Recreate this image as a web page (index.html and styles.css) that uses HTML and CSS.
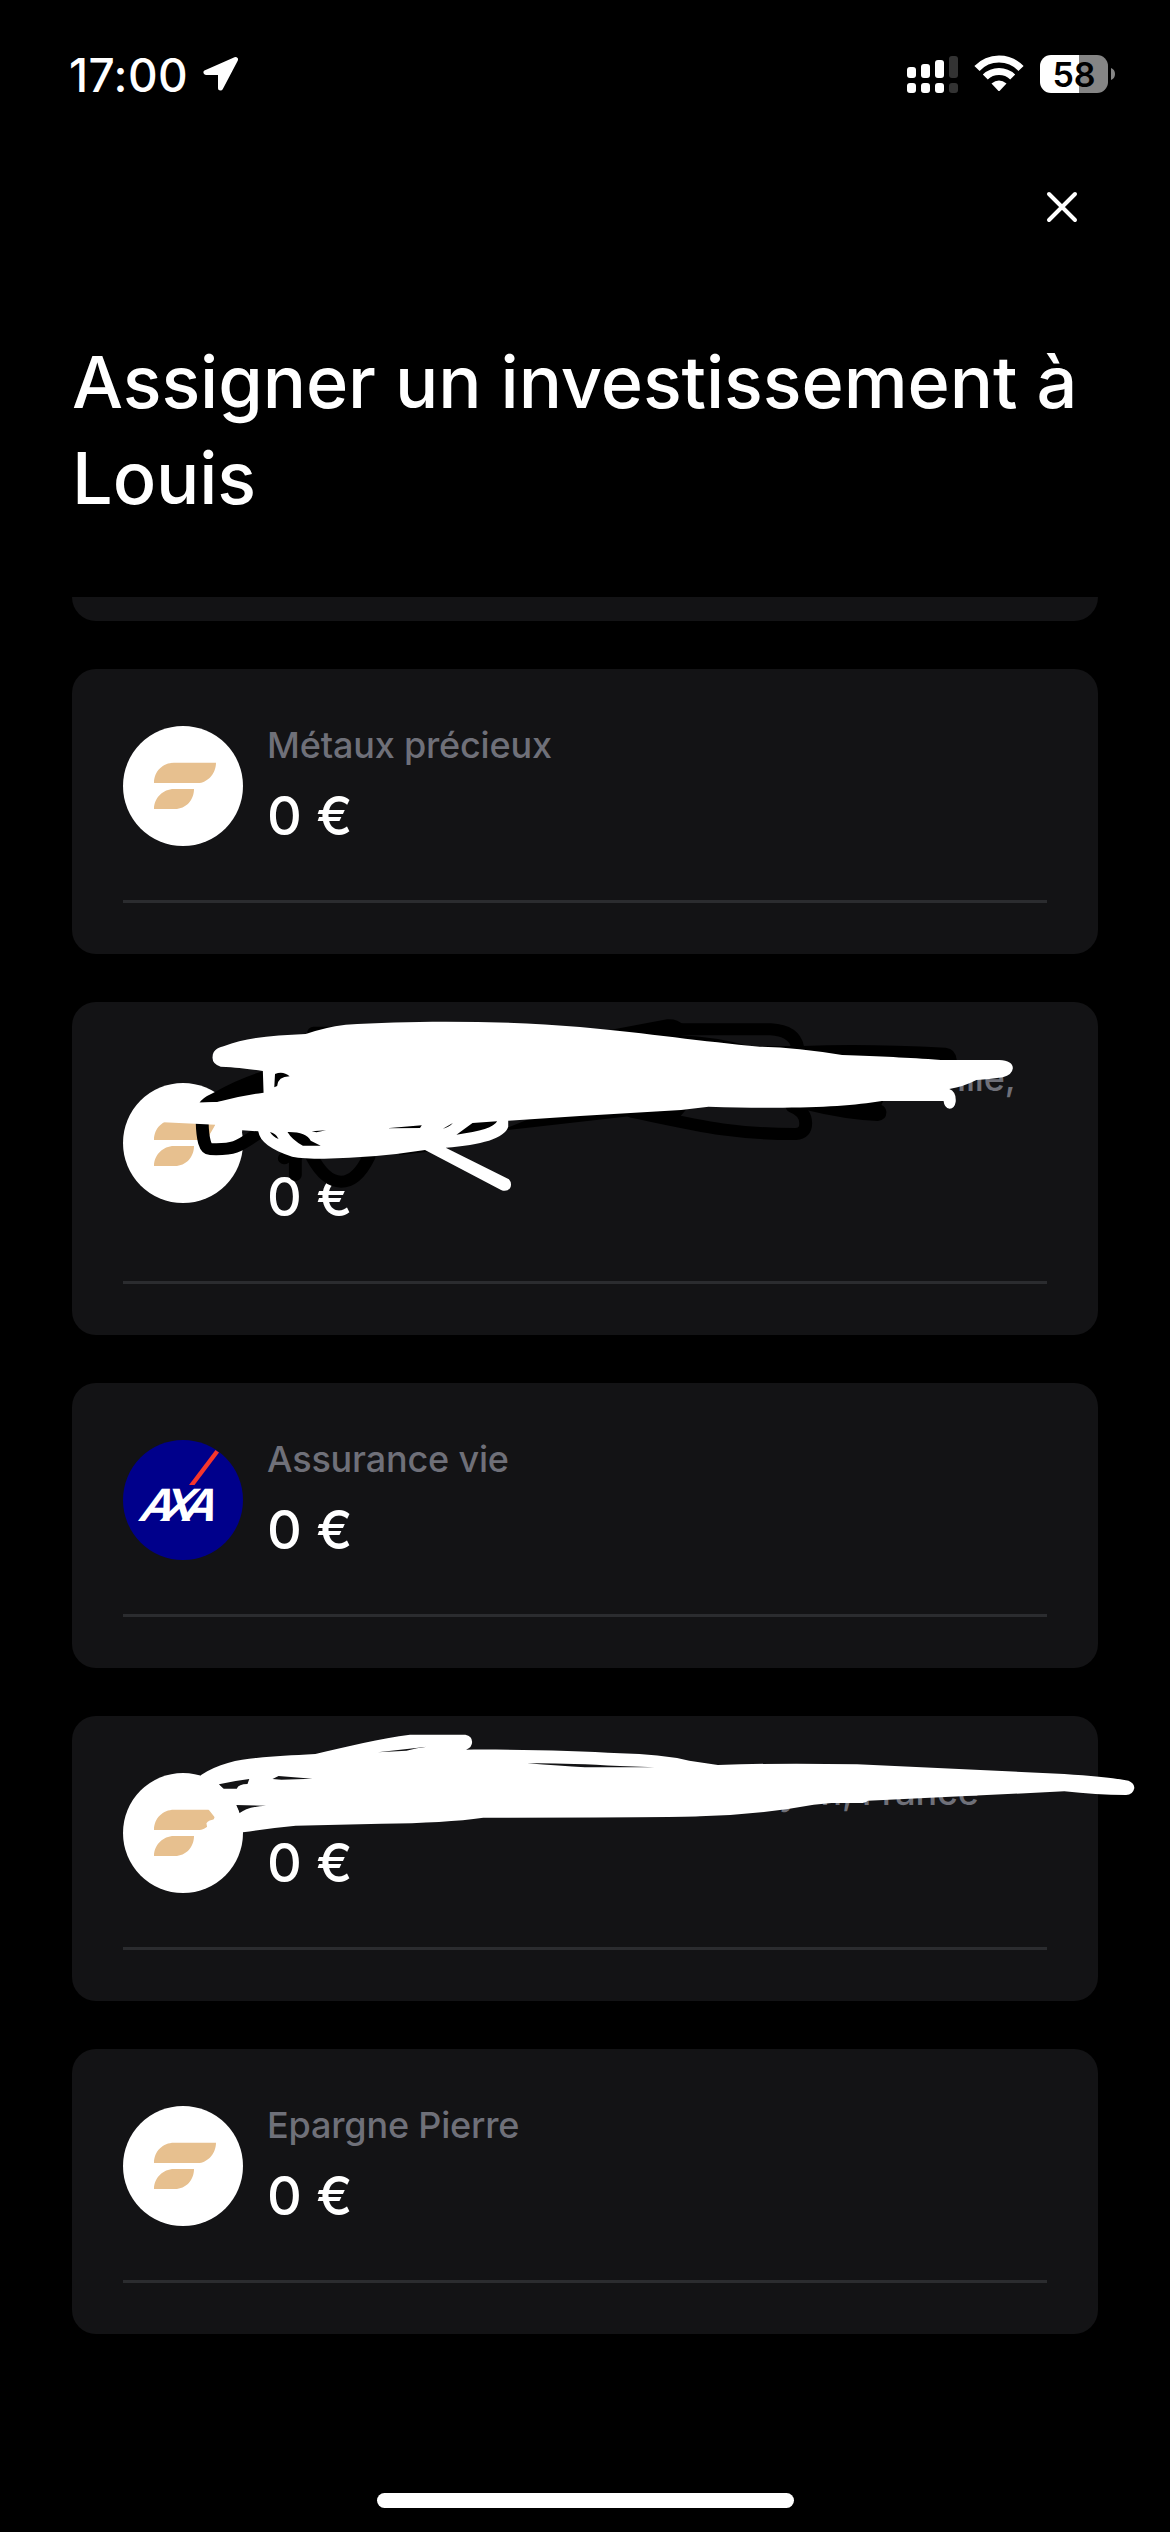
FILE: index.html
```html
<!DOCTYPE html>
<html lang="fr">
<head>
<meta charset="utf-8">
<title>Assigner un investissement</title>
<link rel="stylesheet" href="styles.css">
</head>
<body>
<svg class="defs" width="0" height="0">
  <symbol id="mark" viewBox="0 0 120 120">
    <rect width="120" height="120" fill="#fff"/>
    <path fill="#e7c08f" d="M31 57C31 45 40 36.7 51 36.7H93C93 48 84 57 75 57ZM31 83C31 72 40 63 51 63H71C71 74 63 83 52 83Z"/>
  </symbol>
</svg>
<div class="screen">
  <header class="status">
    <div class="status-left">
      <span class="time">17:00</span>
      <svg width="38" height="38" viewBox="0 0 38 38"><path d="M33.500 4.500L4 17.500H18.500V33Z" fill="#fff" stroke="#fff" stroke-width="5" stroke-linejoin="round"/></svg>
    </div>
    <div class="status-right">
      <svg width="52" height="38" viewBox="0 0 52 38" fill="#fff">
        <rect y="12" width="9" height="11" rx="3"/><rect x="14" y="9" width="9" height="14" rx="3"/><rect x="28" y="5" width="9" height="18" rx="3"/><rect x="42" y="1" width="9" height="22" rx="3" fill="#333"/>
        <rect y="28" width="9" height="10" rx="3"/><rect x="14" y="28" width="9" height="10" rx="3"/><rect x="28" y="28" width="9" height="10" rx="3"/><rect x="42" y="28" width="9" height="10" rx="3" fill="#333"/>
      </svg>
      <svg class="wifi" width="50" height="38" viewBox="0 0 50 38">
        <g fill="none" stroke="#fff" stroke-width="7.200"><path d="M3 13.500Q12 4 25 4T47 13.500"/><path d="M11.300 22Q17 16.500 25 16.500T38.700 22"/></g>
        <path d="M17.500 28.500Q25 22.500 32.500 28.500L26 35.500Q25 36.500 24 35.500Z" fill="#fff"/>
      </svg>
      <div class="battery">58</div>
      <svg class="nub" width="4" height="12" viewBox="0 0 4 12"><path d="M0 0Q4 1.500 4 6T0 12Z" fill="#858585"/></svg>
    </div>
  </header>
  <div class="close">
    <svg width="32" height="32" viewBox="0 0 32 32"><path d="M3 3L29 29M29 3L3 29" stroke="#fff" stroke-width="4" stroke-linecap="round"/></svg>
  </div>
  <h1>Assigner un investissement à Louis</h1>
  <main class="list">
    <article class="card passed"></article>
    <article class="card">
      <div class="row"><svg class="avatar"><use href="#mark"/></svg>
        <div><div class="label">Métaux précieux</div><div class="amount">0 €</div></div></div>
    </article>
    <article class="card">
      <div class="row"><svg class="avatar"><use href="#mark"/></svg>
        <div><div class="label two-lines"><span class="tail-a">ille,</span></div><div class="amount">0 €</div></div></div>
      <svg class="scribble" width="1110" height="350" viewBox="0 0 3108 1050" preserveAspectRatio="none">
        <g fill="none" stroke="#000" stroke-width="36" stroke-linecap="round">
          <path d="M710 128H800M1740 118H1990Q2055 122 2065 170M1600 365C1800 410 1880 432 2060 432Q2088 430 2088 400Q2088 365 2050 350M398 395Q400 477 420 477C490 480 500 470 555 430M628 505L659 480V555M705 500C755 600 820 600 865 500"/>
        </g>
        <path d="M1540 120L1700 88Q1730 86 1745 105L1740 136Q1830 140 1930 168H2080Q2250 160 2480 173Q2508 176 2511 210H1900ZM390 340Q395 325 430 308Q500 265 570 243H680V320L440 336ZM1230 423L1600 378L1720 400L1760 350H1400ZM2080 358Q2200 390 2290 393Q2314 390 2314 366Q2312 350 2300 345L2306 330H2100ZM950 495L1030 485V460H930Z"/>
        <path fill="#fff" d="M427 203C427 175 450 172 460 168C520 142 600 136 688 132Q740 112 800 104C1000 90 1250 92 1456 111C1650 130 1800 155 1960 170Q2060 172 2190 195C2300 200 2370 202 2466 210H2630Q2668 212 2668 235Q2666 255 2640 262Q2600 268 2566 270Q2530 290 2490 297Q2510 305 2508 335Q2505 355 2491 356Q2476 354 2474 333H2301C2200 350 2080 358 1816 350Q1750 360 1680 364L1456 378L1255 392V410C1245 445 1180 465 1080 473L1257 568Q1267 580 1260 595Q1250 607 1235 600L1022 480Q880 504 740 506Q680 506 650 500C590 480 560 455 555 424L510 421Q512 445 480 450Q430 455 420 432L435 404L290 397L270 380L300 340L440 336Q500 318 570 308L568 243C520 235 500 233 450 230Q427 222 427 203Z"/>
        <g fill="#000"><path d="M602 252Q625 242 643 259Q610 260 608 288L600 292ZM1110 434L1155 399L1224 394Q1212 420 1110 434ZM637 426Q690 425 702 452L730 467H680Q650 450 637 426ZM588 426Q605 430 612 447Q595 440 588 426ZM915 415L1013 406L1008 414ZM1072 416L1100 399Q1090 412 1072 416ZM705 424L745 421L718 427Z"/></g>
      </svg>
    </article>
    <article class="card">
      <div class="row">
        <svg class="avatar" viewBox="0 0 120 120"><rect width="120" height="120" fill="#00008b"/><path d="M66 45L92.500 10L96 12.500L71.500 45Z" fill="#f5362c"/><text class="axa" transform="translate(16 81) skewX(-10)" textLength="77">AXA</text></svg>
        <div><div class="label">Assurance vie</div><div class="amount">0 €</div></div></div>
    </article>
    <article class="card">
      <div class="row"><svg class="avatar"><use href="#mark"/></svg>
        <div><div class="label"><span class="tail-b">yon, France</span></div><div class="amount">0 €</div></div></div>
      <svg class="scribble low" width="1110" height="310" viewBox="0 0 3108 930" preserveAspectRatio="none">
        <path fill="#fff" fill-rule="evenodd" d="M395 225C440 192 500 178 550 174C600 168 650 166 715 162C800 140 900 115 980 104H1135Q1154 108 1154 126Q1154 142 1137 149C1280 148 1450 152 1568 160Q1680 162 1762 182L1842 195Q2020 188 2232 193L2812 222Q2930 230 2992 242Q3009 250 3008 265Q3004 285 2985 285Q2900 285 2812 274L2262 302Q2255 309 2240 309H2160L2110 314Q1960 344 1792 349Q1700 353 1185 353Q1080 369 900 371L660 377Q590 384 512 397L440 400Q410 395 410 370Q415 360 437 357L380 280ZM445 253L457 266H495Q500 252 525 252L530 237Q490 242 445 253ZM595 237L612 228L707 236L620 239ZM493 315L502 340Q525 320 577 317ZM890 157L1028 140Q1000 143 970 152ZM1308 190Q1400 198 1470 202H1665L1568 198Q1400 188 1308 190Z"/>
      </svg>
    </article>
    <article class="card">
      <div class="row"><svg class="avatar"><use href="#mark"/></svg>
        <div><div class="label">Epargne Pierre</div><div class="amount">0 €</div></div></div>
    </article>
  </main>
  <div class="home"></div>
</div>
</body>
</html>
```
FILE: styles.css
```css
* { box-sizing: border-box; }
body { margin: 0; background: #000; }
.defs { display: block; }
.screen {
  width: 1170px; height: 2532px; overflow: hidden;
  display: flex; flex-direction: column;
  background: #000; color: #fff;
  font-family: Inter, "Liberation Sans", sans-serif;
}
.status {
  height: 141px; padding: 55px 55px 0 69px;
  display: flex; justify-content: space-between; align-items: flex-start;
}
.status svg { display: block; }
.status-left { display: flex; gap: 12px; align-items: flex-start; }
.time { width: 121px; font-size: 46px; font-weight: 500; line-height: 40px; letter-spacing: 0.4px; white-space: nowrap; }
.status-right { display: flex; align-items: flex-start; }
.wifi { margin: 0 16px 0 15px; }
.battery {
  width: 68px; height: 38px; border-radius: 11px;
  background: linear-gradient(90deg, #fff 57%, #858585 57%);
  color: #000; font-size: 34px; font-weight: 600; line-height: 39px; text-align: center;
}
.nub { margin: 13px 0 0 3px; }
.close { display: flex; justify-content: flex-end; height: 171px; padding: 50px 92px 0 0; }
h1 {
  margin: 0; height: 285px; padding: 22px 72px 0;
  font-size: 72px; font-weight: 500; line-height: 96px; letter-spacing: -0.08px;
}
.list { height: 1860px; overflow: hidden; padding: 0 72px; display: flex; flex-direction: column; gap: 48px; }
.card {
  position: relative; flex: none; padding: 51px;
  background: #131315; border-radius: 24px;
}
.passed { height: 285px; margin-top: -261px; }
.row { display: flex; align-items: center; gap: 24px; padding-bottom: 48px; border-bottom: 3px solid #2b2c2f; }
.avatar { flex: none; width: 120px; height: 120px; border-radius: 50%; }
.label { height: 48px; margin-bottom: 12px; padding-top: 1px; color: #6f7079; font-size: 36px; font-weight: 500; line-height: 48px; letter-spacing: -0.18px; white-space: nowrap; }
.two-lines { height: 96px; }
.tail-a { margin-left: 690px; }
.tail-b { margin-left: 512px; }
.amount { font-size: 54px; font-weight: 500; line-height: 72px; white-space: nowrap; }
.axa { font: italic bold 47px "Liberation Sans", sans-serif; fill: #fff; }
.scribble { position: absolute; left: -12px; top: -12px; }
.low { top: -16px; }
.home { flex: none; width: 417px; height: 15px; margin: 36px auto 0; border-radius: 8px; background: #fff; }
```
